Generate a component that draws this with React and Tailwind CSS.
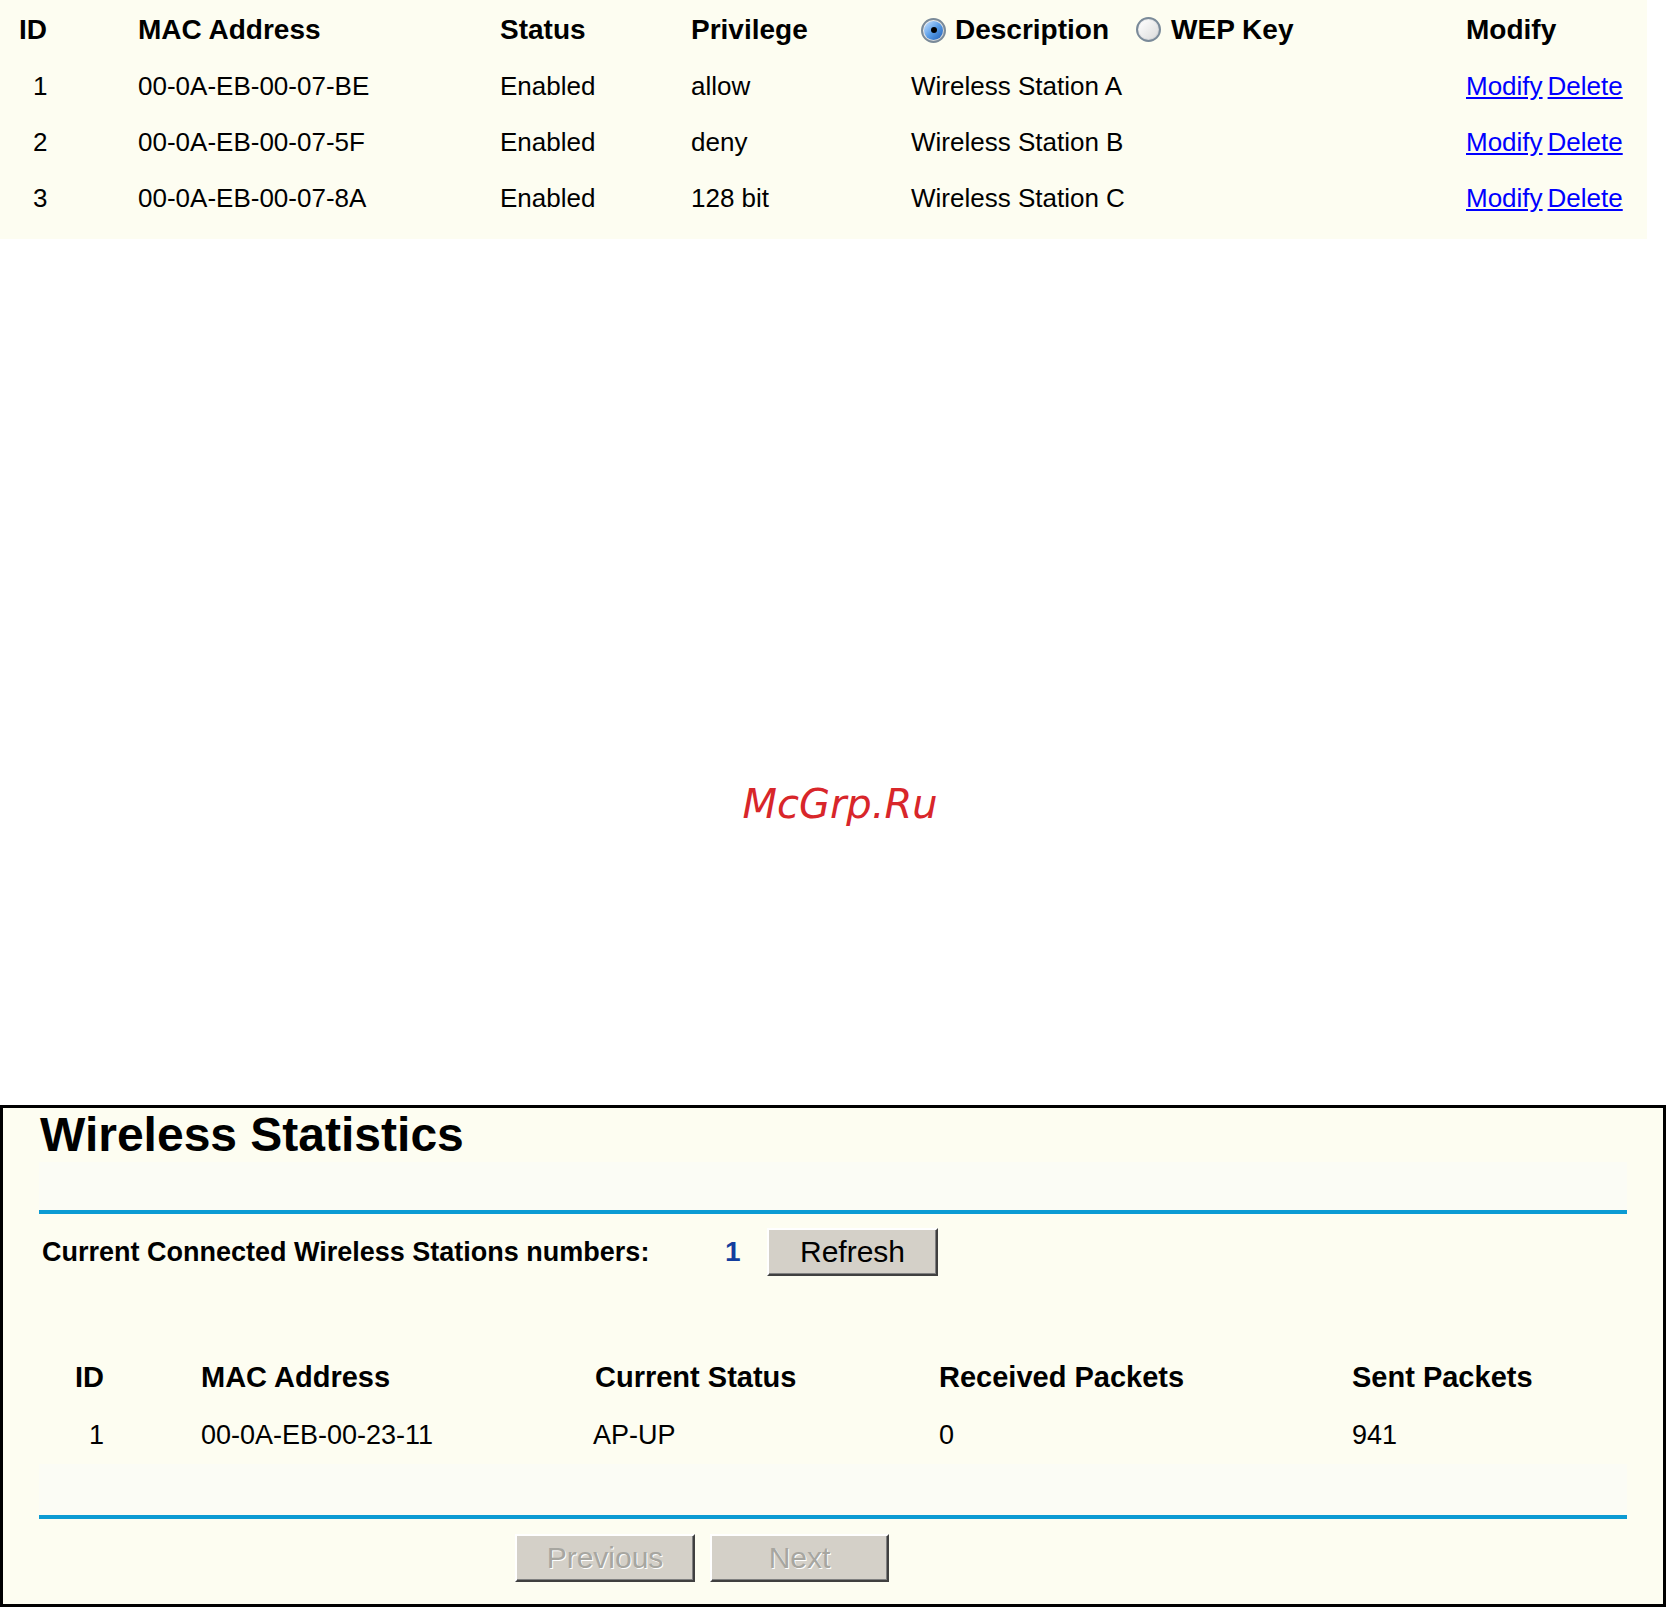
import React from 'react';

const Radio = ({ checked }) => (
  <span className="inline-flex items-center justify-center w-[25px] h-[25px] rounded-full border-2 border-[#7a8a99] bg-gradient-to-br from-[#f4f4f4] to-[#c9ccd0] shrink-0">
    {checked ? (
      <span className="flex items-center justify-center w-[19px] h-[19px] rounded-full bg-gradient-to-br from-[#cfe6ff] via-[#5a9ee8] to-[#1f5fb8]">
        <span className="w-[6px] h-[6px] rounded-full bg-black"></span>
      </span>
    ) : (
      <span className="w-[19px] h-[19px] rounded-full bg-gradient-to-br from-[#ffffff] to-[#dcdcdc]"></span>
    )}
  </span>
);

const WinButton = ({ children, disabled, className }) => (
  <button
    className={`h-[48px] bg-[#d4d0c8] border-2 border-t-white border-l-white border-b-[#404040] border-r-[#404040] shadow-[inset_-1px_-1px_0_#808080] text-[30px] leading-none ${disabled ? 'text-[#a7a6a0] [text-shadow:1px_1px_0_#ffffff]' : 'text-black'} ${className}`}
  >
    {children}
  </button>
);

const App = () => {
  const entries = [
    { id: 1, mac: '00-0A-EB-00-07-BE', status: 'Enabled', privilege: 'allow', desc: 'Wireless Station A' },
    { id: 2, mac: '00-0A-EB-00-07-5F', status: 'Enabled', privilege: 'deny', desc: 'Wireless Station B' },
    { id: 3, mac: '00-0A-EB-00-07-8A', status: 'Enabled', privilege: '128 bit', desc: 'Wireless Station C' },
  ];

  return (
    <div className="w-[1666px] h-[1607px] bg-white text-black font-['Liberation_Sans',Arial,sans-serif]">
      {/* MAC filtering table */}
      <div className="w-[1647px] h-[239px] bg-[#fdfdf1] pt-[2px]">
        <div className="grid grid-cols-[138px_362px_191px_220px_555px_1fr] h-[56px] items-center text-[28px] font-bold">
          <div className="pl-[19px]">ID</div>
          <div>MAC Address</div>
          <div>Status</div>
          <div>Privilege</div>
          <div className="flex items-center pl-[10px]">
            <Radio checked />
            <span className="ml-[9px]">Description</span>
            <span className="ml-[27px]"><Radio /></span>
            <span className="ml-[10px]">WEP Key</span>
          </div>
          <div>Modify</div>
        </div>
        {entries.map((e) => (
          <div key={e.id} className="grid grid-cols-[138px_362px_191px_220px_555px_1fr] h-[56px] items-center text-[26px]">
            <div className="pl-[33px]">{e.id}</div>
            <div>{e.mac}</div>
            <div>{e.status}</div>
            <div>{e.privilege}</div>
            <div>{e.desc}</div>
            <div className="flex gap-[5px] text-[#0000ff]">
              <a href="#" className="underline">Modify</a>
              <a href="#" className="underline">Delete</a>
            </div>
          </div>
        ))}
      </div>

      {/* watermark */}
      <div className="h-[866px] flex justify-center pt-[545px] pl-[14px]">
        <span className="text-[40px] leading-[40px] italic text-[#d8262a] font-['DejaVu_Sans',sans-serif]">McGrp.Ru</span>
      </div>

      {/* Wireless Statistics panel */}
      <div className="h-[502px] border-[3px] border-black bg-[#fdfdf1]">
        <div className="h-[54px] pl-[37px] text-[48px] leading-[54px] font-bold">Wireless Statistics</div>
        <div className="mx-[36px] h-[48px] bg-[#fbfcf5]"></div>
        <div className="mx-[36px] h-[4px] bg-[#0c9bd3]"></div>
        <div className="mx-[36px] h-[76px] flex items-center">
          <span className="pl-[3px] text-[27px] font-bold w-[686px]">Current Connected Wireless Stations numbers:</span>
          <span className="text-[28px] font-bold text-[#133d9e] w-[42px]">1</span>
          <WinButton className="w-[171px]">Refresh</WinButton>
        </div>
        <div className="h-[60px]"></div>
        <div className="mx-[36px] grid grid-cols-[162px_394px_344px_413px_1fr] h-[56px] items-center text-[29px] font-bold">
          <div className="pl-[36px]">ID</div>
          <div>MAC Address</div>
          <div>Current Status</div>
          <div>Received Packets</div>
          <div>Sent Packets</div>
        </div>
        <div className="mx-[36px] grid grid-cols-[162px_394px_344px_413px_1fr] h-[58px] items-center text-[27px]">
          <div className="pl-[50px]">1</div>
          <div>00-0A-EB-00-23-11</div>
          <div className="-ml-[2px]">AP-UP</div>
          <div>0</div>
          <div>941</div>
        </div>
        <div className="mx-[36px] h-[51px] bg-[#fbfcf5]"></div>
        <div className="mx-[36px] h-[4px] bg-[#0c9bd3]"></div>
        <div className="flex gap-[15px] pl-[512px] pt-[15px]">
          <WinButton disabled className="w-[180px]">Previous</WinButton>
          <WinButton disabled className="w-[179px]">Next</WinButton>
        </div>
      </div>
    </div>
  );
};

export default App;
